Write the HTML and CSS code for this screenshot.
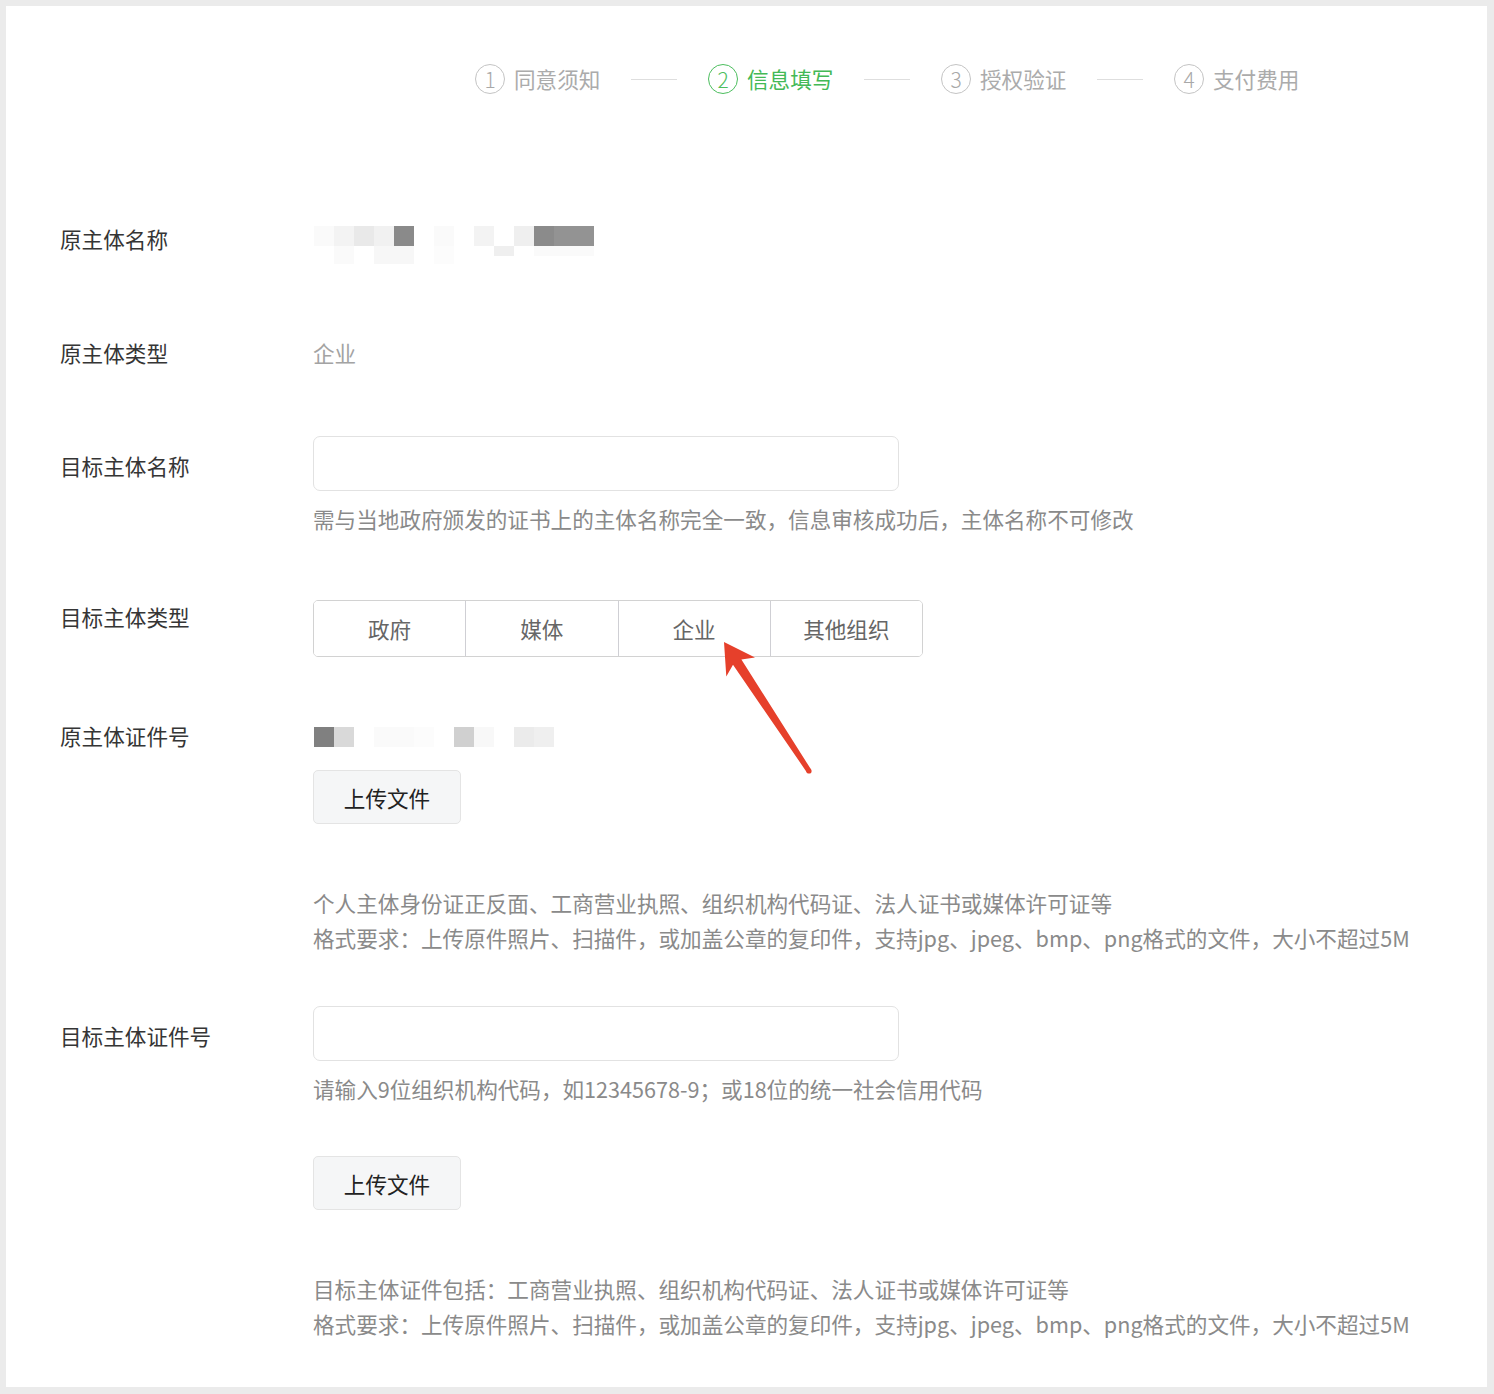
FILE: index.html
```html
<!DOCTYPE html>
<html lang="zh-CN">
<head>
<meta charset="UTF-8">
<meta name="viewport" content="width=device-width, initial-scale=1.0">
<title>信息填写</title>
<link rel="stylesheet" href="styles.css">
</head>
<body>
    <div class="panel">
        <div class="steps">
            <div class="step">
                <span class="step-num">1</span>
                <span class="step-text">同意须知</span>
            </div>
            <span class="step-line"></span>
            <div class="step active">
                <span class="step-num">2</span>
                <span class="step-text">信息填写</span>
            </div>
            <span class="step-line"></span>
            <div class="step">
                <span class="step-num">3</span>
                <span class="step-text">授权验证</span>
            </div>
            <span class="step-line"></span>
            <div class="step">
                <span class="step-num">4</span>
                <span class="step-text">支付费用</span>
            </div>
        </div>

        <div class="form">
            <div class="row row-name">
                <label class="label">原主体名称</label>
                <div class="value">
                    <svg class="mosaic mosaic-name" width="300" height="38" viewBox="0 0 300 38">
                        <rect x="1" y="0" width="20" height="20" fill="#fafafa"/>
                        <rect x="21" y="0" width="20" height="20" fill="#f3f3f3"/>
                        <rect x="41" y="0" width="20" height="20" fill="#e9e9e9"/>
                        <rect x="61" y="0" width="20" height="20" fill="#f1f1f1"/>
                        <rect x="81" y="0" width="20" height="20" fill="#8a8a8a"/>
                        <rect x="121" y="0" width="20" height="20" fill="#fafafa"/>
                        <rect x="161" y="0" width="20" height="20" fill="#f3f3f3"/>
                        <rect x="201" y="0" width="20" height="20" fill="#efefef"/>
                        <rect x="221" y="0" width="20" height="20" fill="#8b8b8b"/>
                        <rect x="241" y="0" width="40" height="20" fill="#939393"/>
                        <rect x="21" y="20" width="20" height="18" fill="#fafafa"/>
                        <rect x="61" y="20" width="40" height="18" fill="#f7f7f7"/>
                        <rect x="121" y="20" width="20" height="18" fill="#fcfcfc"/>
                        <rect x="181" y="20" width="20" height="10" fill="#efefef"/>
                        <rect x="221" y="20" width="60" height="10" fill="#fafafa"/>
                    </svg>
                </div>
            </div>

            <div class="row row-type">
                <label class="label">原主体类型</label>
                <div class="value">
                    <span class="plain">企业</span>
                </div>
            </div>

            <div class="row row-target">
                <label class="label label-input">目标主体名称</label>
                <div class="value">
                    <input type="text" class="text-input">
                    <p class="hint hint-single">需与当地政府颁发的证书上的主体名称完全一致，信息审核成功后，主体名称不可修改</p>
                </div>
            </div>

            <div class="row row-kind">
                <label class="label label-seg">目标主体类型</label>
                <div class="value">
                    <div class="segmented">
                        <button class="seg">政府</button>
                        <button class="seg">媒体</button>
                        <button class="seg">企业</button>
                        <button class="seg">其他组织</button>
                    </div>
                </div>
            </div>

            <div class="row row-cert">
                <label class="label">原主体证件号</label>
                <div class="value">
                    <svg class="mosaic mosaic-cert" width="260" height="20" viewBox="0 0 260 20">
                        <rect x="1" y="0" width="20" height="20" fill="#808080"/>
                        <rect x="21" y="0" width="20" height="20" fill="#d9d9d9"/>
                        <rect x="61" y="0" width="40" height="20" fill="#fafafa"/>
                        <rect x="101" y="0" width="20" height="20" fill="#fcfcfc"/>
                        <rect x="141" y="0" width="20" height="20" fill="#d0d0d0"/>
                        <rect x="161" y="0" width="20" height="20" fill="#f8f8f8"/>
                        <rect x="201" y="0" width="20" height="20" fill="#ebebeb"/>
                        <rect x="221" y="0" width="20" height="20" fill="#efefef"/>
                    </svg>
                    <button class="upload upload-cert">上传文件</button>
                    <p class="hint hint-block">个人主体身份证正反面、工商营业执照、组织机构代码证、法人证书或媒体许可证等<br>格式要求：上传原件照片、扫描件，或加盖公章的复印件，支持jpg、jpeg、bmp、png格式的文件，大小不超过5M</p>
                </div>
            </div>

            <div class="row row-target-cert">
                <label class="label label-input">目标主体证件号</label>
                <div class="value">
                    <input type="text" class="text-input">
                    <p class="hint hint-single">请输入9位组织机构代码，如12345678-9；或18位的统一社会信用代码</p>
                    <button class="upload upload-target">上传文件</button>
                    <p class="hint hint-block">目标主体证件包括：工商营业执照、组织机构代码证、法人证书或媒体许可证等<br>格式要求：上传原件照片、扫描件，或加盖公章的复印件，支持jpg、jpeg、bmp、png格式的文件，大小不超过5M</p>
                </div>
            </div>
        </div>

        <!-- annotation arrow pointing at 企业 -->
        <svg class="arrow" width="130" height="160" viewBox="700 630 130 160">
            <polygon fill="#e6402b" points="724,642 755,657.5 741.4,659.4 811.1,769.6 806.9,772.4 733,664.8 726.3,676.5"/>
            <circle cx="809" cy="771" r="2.6" fill="#e6402b"/>
        </svg>
    </div>
</body>
</html>
```

FILE: styles.css
```css
html, body {
    margin: 0;
    padding: 0;
}
body {
    background-color: #ebebeb;
    font-family: "Noto Sans CJK SC", "Noto Sans", sans-serif;
    color: #353535;
    width: 1494px;
    height: 1394px;
    overflow: hidden;
}
.panel {
    position: relative;
    margin: 6px;
    width: 1481px;
    height: 1381px;
    background-color: #fff;
    box-sizing: border-box;
}

/* step bar */
.steps {
    display: flex;
    align-items: center;
    padding-top: 58px;
    padding-left: 469px;
    height: 30px;
}
.step {
    display: flex;
    align-items: center;
    gap: 9px;
    color: #ababab;
}
.step-num {
    width: 28px;
    height: 28px;
    border: 1px solid #c4c4c4;
    border-radius: 50%;
    display: flex;
    align-items: center;
    justify-content: center;
    font-size: 21px;
    font-weight: 300;
    line-height: 1;
    color: #a8a8a8;
}
.step-text {
    font-size: 21.6px;
    line-height: 30px;
    width: 86px;
    white-space: nowrap;
}
.step.active .step-num {
    border-color: #4cbe5e;
    color: #4cbe5e;
}
.step.active .step-text {
    color: #43b956;
}
.step-line {
    width: 46px;
    height: 1px;
    background-color: #dedede;
    margin: 0 31px 0 31px;
}

/* form */
.form {
    padding-left: 54px;
}
.row {
    display: grid;
    grid-template-columns: 253px 1fr;
    align-items: start;
}
.label {
    font-size: 21.6px;
    line-height: 32px;
    color: #353535;
}
.value {
    display: flex;
    flex-direction: column;
    align-items: flex-start;
}
.row-name {
    margin-top: 129px;
}
.mosaic-name {
    margin-top: 3px;
    display: block;
}
.row-type {
    margin-top: 73px;
}
.plain {
    font-size: 21.6px;
    line-height: 32px;
    color: #a3a3a3;
}
.row-target {
    margin-top: 67px;
}
.label-input {
    margin-top: 14px;
}
.text-input {
    width: 586px;
    height: 55px;
    box-sizing: border-box;
    border: 1px solid #e2e2e2;
    border-radius: 7px;
    background: #fff;
    margin: 0;
    padding: 0 16px;
    font-size: 20px;
}
.hint {
    margin: 0;
    font-size: 21.6px;
    color: #8a8a8a;
}
.hint-single {
    margin-top: 12px;
    line-height: 32px;
}
.hint-block {
    line-height: 35px;
}
.row-kind {
    margin-top: 65px;
}
.label-seg {
    margin-top: 1px;
}
.segmented {
    display: flex;
    width: 610px;
    height: 57px;
    border: 1px solid #d2d2d2;
    border-radius: 5px;
    box-sizing: border-box;
    overflow: hidden;
}
.seg {
    flex: 1;
    border: none;
    border-left: 1px solid #cfcfd4;
    background: #fff;
    font-family: inherit;
    font-size: 21.6px;
    color: #666;
    padding: 0;
    margin: 0;
}
.seg:first-child {
    border-left: none;
}
.row-cert {
    margin-top: 63px;
}
.mosaic-cert {
    margin-top: 7px;
    display: block;
}
.upload {
    width: 148px;
    height: 54px;
    box-sizing: border-box;
    border: 1px solid #e4e4e4;
    border-radius: 5px;
    background-color: #f5f6f7;
    font-family: inherit;
    font-size: 21.6px;
    color: #222;
    padding: 0;
    cursor: pointer;
}
.upload-cert {
    margin-top: 23px;
}
.row-cert .hint-block {
    margin-top: 61px;
}
.row-target-cert {
    margin-top: 51px;
}
.upload-target {
    margin-top: 51px;
}
.row-target-cert .hint-block {
    margin-top: 61px;
}

.arrow {
    position: absolute;
    left: 694px;
    top: 624px;
}
```
